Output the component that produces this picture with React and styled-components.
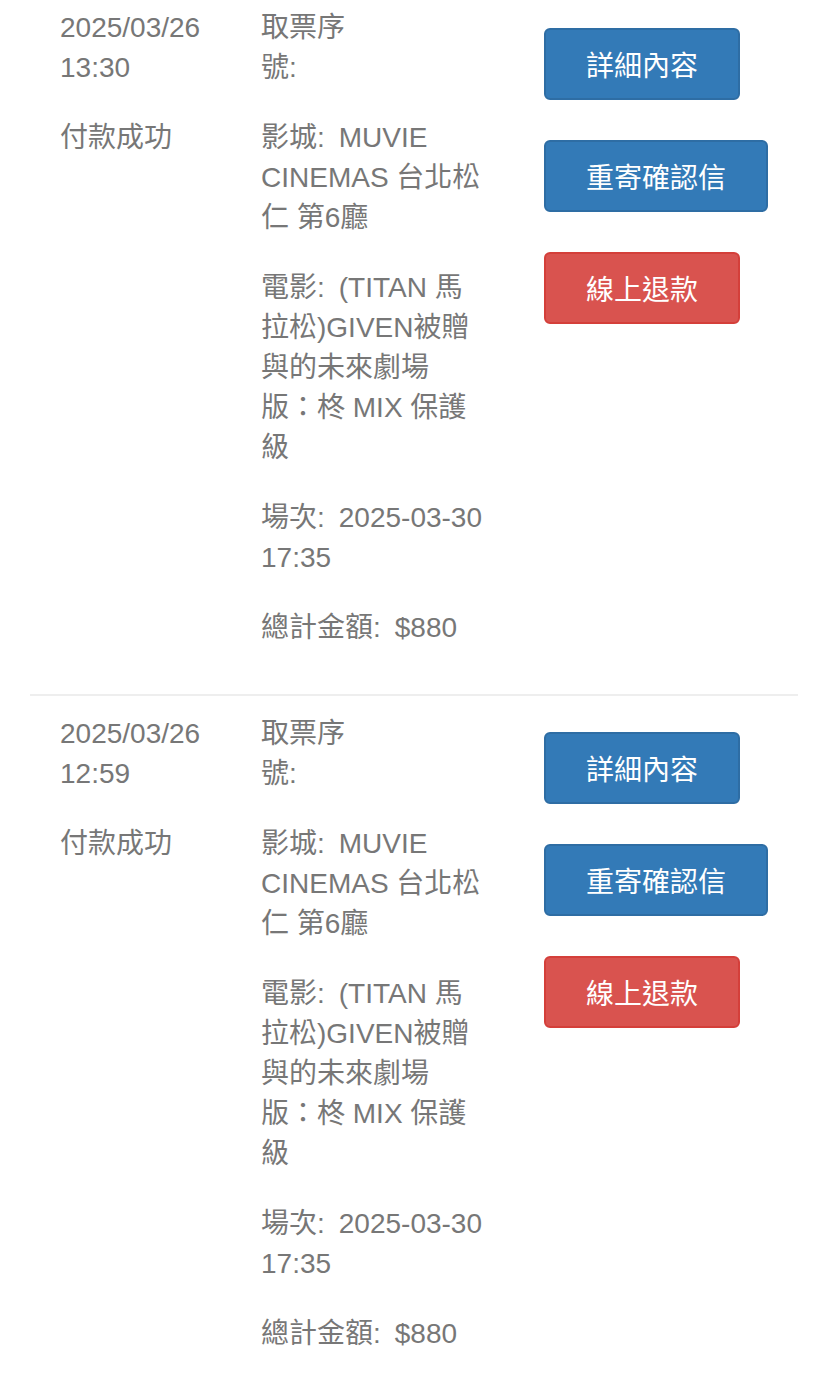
import React from "react";
import { styled, createGlobalStyle } from "styled-components";

const GlobalStyle = createGlobalStyle`
  body {
    margin: 0;
    background: #fff;
    font-family: "Liberation Sans", "Noto Sans CJK TC", sans-serif;
  }
`;

const List = styled.div`
  width: 828px;
  padding: 0 30px;
  box-sizing: border-box;
`;

const Row = styled.div`
  display: grid;
  grid-template-columns: 201px 222px auto;
  padding: ${(p) => (p.$first ? "8px" : "18px")} 0 46px 30px;
  border-top: ${(p) => (p.$first ? "none" : "2px solid #eeeeee")};
`;

const Cell = styled.div`
  display: flex;
  flex-direction: column;
  gap: 30px;
  color: #777;
  font-size: 28px;
  line-height: 40px;
`;

const Para = styled.div``;

const NoBreak = styled.span`
  white-space: nowrap;
`;

const Blank = styled.span`
  display: inline-block;
  width: 130px;
`;

const Actions = styled.div`
  display: flex;
  flex-direction: column;
  align-items: flex-start;
  gap: 40px;
  padding: ${(p) => (p.$first ? "20px" : "18px")} 0 0 61px;
`;

const Button = styled.button`
  height: 72px;
  padding: 0 40px;
  white-space: nowrap;
  font-family: "Liberation Sans", "Noto Sans CJK TC", sans-serif;
  font-size: 28px;
  color: #fff;
  border-radius: 6px;
  border: 2px solid ${(p) => (p.$danger ? "#d43f3a" : "#2e6da4")};
  background: ${(p) => (p.$danger ? "#d9534f" : "#337ab7")};
  cursor: pointer;
`;

const orders = [
  { date: "2025/03/26", time: "13:30" },
  { date: "2025/03/26", time: "12:59" },
];

// label + en space, as the source renders a wider gap after the colon
const field = (label, value) => `${label}:\u2002${value}`;

function Order({ order, first }) {
  return (
    <Row $first={first}>
      <Cell>
        <Para>
          {order.date}
          <br />
          {order.time}
        </Para>
        <Para>付款成功</Para>
      </Cell>
      <Cell>
        <Para>
          取票序<NoBreak>號:<Blank /></NoBreak>
        </Para>
        <Para>{field("影城", "MUVIE CINEMAS 台北松仁 第6廳")}</Para>
        <Para>{field("電影", "(TITAN 馬拉松)GIVEN被贈與的未來劇場版：柊 MIX 保護級")}</Para>
        <Para>{field("場次", "2025-03-30 17:35")}</Para>
        <Para>{field("總計金額", "$880")}</Para>
      </Cell>
      <Actions $first={first}>
        <Button>詳細內容</Button>
        <Button>重寄確認信</Button>
        <Button $danger>線上退款</Button>
      </Actions>
    </Row>
  );
}

export default function App() {
  return (
    <>
      <GlobalStyle />
      <List>
        {orders.map((o, i) => (
          <Order key={i} order={o} first={i === 0} />
        ))}
      </List>
    </>
  );
}
